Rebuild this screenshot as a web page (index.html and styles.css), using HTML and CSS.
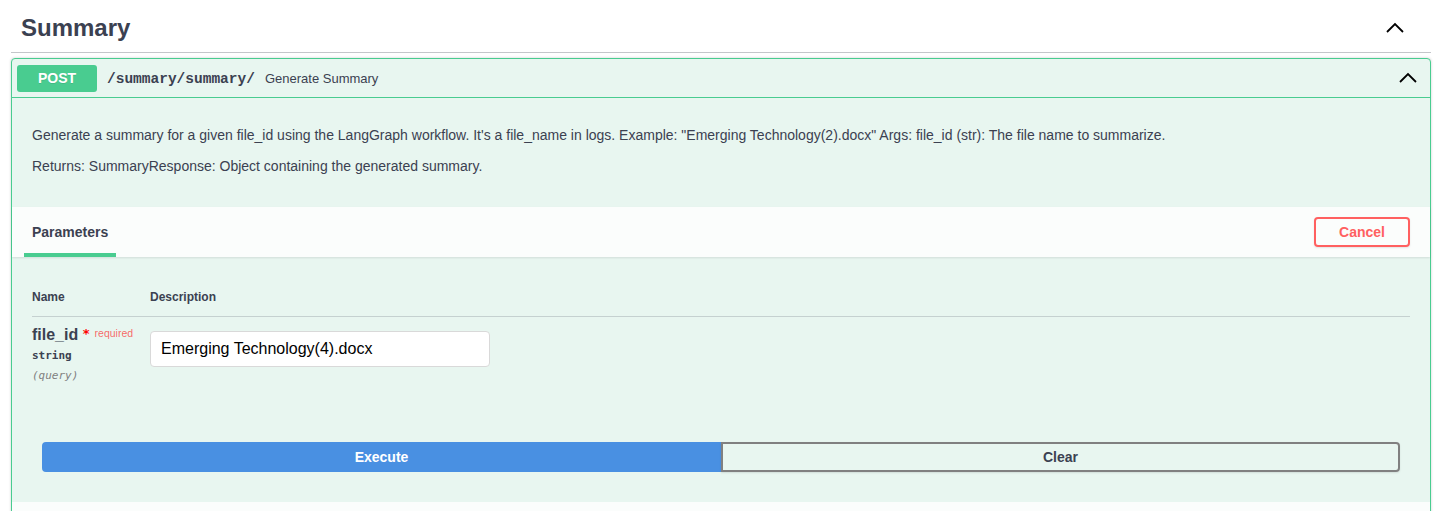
FILE: index.html
```html
<!DOCTYPE html>
<html>
<head>
<meta charset="utf-8">
<link rel="stylesheet" href="styles.css">
</head>
<body>
<div class="wrapper">
  <h3 class="tag">
    <span class="tag-name">Summary</span>
    <svg class="arrow" width="20" height="20" viewBox="0 0 20 20"><polyline points="2,14 10,6 18,14" fill="none" stroke="#000" stroke-width="1.8"/></svg>
  </h3>
  <div class="opblock">
    <div class="op-summary">
      <span class="method">POST</span>
      <span class="path">/summary/summary/</span>
      <span class="op-desc">Generate Summary</span>
      <svg class="arrow op-arrow" width="20" height="20" viewBox="0 0 20 20"><polyline points="2,14 10,6 18,14" fill="none" stroke="#000" stroke-width="1.8"/></svg>
    </div>
    <div class="op-body">
      <div class="description">
        <p>Generate a summary for a given file_id using the LangGraph workflow. It's a file_name in logs. Example: "Emerging Technology(2).docx" Args: file_id (str): The file name to summarize.</p>
        <p>Returns: SummaryResponse: Object containing the generated summary.</p>
      </div>
      <div class="section-header">
        <div class="tab">Parameters</div>
        <button class="cancel">Cancel</button>
      </div>
      <div class="params">
        <div class="params-head">
          <div class="col-name">Name</div>
          <div class="col-desc">Description</div>
        </div>
        <div class="param-row">
          <div class="col-name">
            <div class="pname">file_id<span class="star">&nbsp;*</span><span class="req">required</span></div>
            <div class="ptype">string</div>
            <div class="pin">(query)</div>
          </div>
          <div class="col-desc">
            <input class="pinput" type="text" value="Emerging Technology(4).docx">
          </div>
        </div>
      </div>
      <div class="exec-wrap">
        <button class="execute">Execute</button>
        <button class="clear">Clear</button>
      </div>
      <div class="responses"></div>
    </div>
  </div>
</div>
</body>
</html>
```

FILE: styles.css
```css
* { box-sizing: border-box; }
html, body { margin: 0; padding: 0; background: #fff; }
body { font-family: "Liberation Sans", Arial, sans-serif; color: #3b4151; }
.wrapper { padding: 0 11px 0 11px; }
.tag {
  margin: 4px 0 5px;
  padding: 10px 20px 10px 10px;
  display: flex;
  align-items: center;
  justify-content: space-between;
  border-bottom: 1px solid rgba(59,65,81,.3);
  font-size: 24px;
  font-weight: 700;
  line-height: 28px;
}
.tag .arrow { margin-right: 6px; }
.opblock {
  border: 1px solid #49cc90;
  border-radius: 4px;
  background: #e8f6f0;
  box-shadow: 0 0 3px rgba(0,0,0,.19);
}
.op-summary {
  display: flex;
  align-items: center;
  padding: 5px;
  border-bottom: 1px solid #49cc90;
  height: 39px;
}
.method {
  background: #49cc90;
  color: #fff;
  font-size: 14px;
  font-weight: 700;
  min-width: 80px;
  padding: 6px 0;
  text-align: center;
  border-radius: 3px;
  text-shadow: 0 1px 0 rgba(0,0,0,.1);
  line-height: 15px;
}
.path {
  font-family: "Liberation Mono", "DejaVu Sans Mono", monospace;
  font-weight: 700;
  font-size: 14.5px;
  padding: 0 10px;
  position: relative;
  top: 1px;
}
.op-desc { font-size: 13px; flex: 1; }
.op-arrow { margin-right: 7px; }
.description { padding: 17px 20px 30px; font-size: 14px; }
.description p { margin: 10px 0 0; line-height: 21px; }
.description p + p { margin-top: 10px; }
.section-header {
  background: rgba(255,255,255,.8);
  box-shadow: 0 1px 2px rgba(0,0,0,.1);
  min-height: 50px;
  padding: 0 20px 0 12px;
  display: flex;
  align-items: center;
  justify-content: space-between;
}
.tab {
  align-self: stretch;
  display: flex;
  align-items: center;
  padding: 0 8px;
  font-size: 14px;
  font-weight: 700;
  border-bottom: 4px solid #49cc90;
  padding-top: 4px;
}
.cancel {
  background: transparent;
  border: 2px solid #ff6060;
  color: #ff6060;
  border-radius: 4px;
  font-family: "Liberation Sans", Arial, sans-serif;
  font-weight: 700;
  font-size: 14px;
  padding: 5px 0;
  width: 96px;
  height: 30px;
  box-shadow: 0 1px 2px rgba(0,0,0,.1);
}
.params { padding: 33px 20px 0; }
.params-head {
  display: flex;
  font-size: 12px;
  font-weight: 700;
  padding-bottom: 12px;
  border-bottom: 1px solid rgba(59,65,81,.2);
}
.col-name { width: 118px; }
.col-desc { flex: 1; }
.param-row { display: flex; padding-top: 8px; }
.pname { font-size: 16px; font-weight: 700; line-height: 20px; }
.star { color: #ff0000; font-size: 13px; vertical-align: top; font-weight: 700; font-family: "DejaVu Sans", sans-serif; position: relative; top: -1px; }
.req { color: rgba(255,0,0,.6); font-size: 10.5px; vertical-align: top; font-weight: 400; margin-left: 5px; position: relative; top: -2px; }
.ptype { font-family: "DejaVu Sans Mono", monospace; font-size: 11px; font-weight: 700; padding: 4px 0 7px; }
.pin { font-family: "DejaVu Sans Mono", monospace; font-size: 11px; font-style: italic; color: #808080; }
.pinput {
  margin-top: 6px;
  width: 340px;
  height: 36px;
  border: 1px solid #d9d9d9;
  border-radius: 4px;
  padding: 8px 10px;
  font-family: "Liberation Sans", Arial, sans-serif;
  font-size: 16px;
  color: #000;
  background: #fff;
}
.exec-wrap { display: flex; padding: 60px 30px 30px; }
.execute, .clear {
  flex: 1;
  height: 30px;
  font-family: "Liberation Sans", Arial, sans-serif;
  font-size: 14px;
  font-weight: 700;
}
.execute {
  background: #4990e2;
  border: 2px solid #4990e2;
  color: #fff;
  border-radius: 4px 0 0 4px;
}
.clear {
  background: transparent;
  border: 2px solid #808080;
  color: #3b4151;
  border-radius: 0 4px 4px 0;
  box-shadow: 0 1px 2px rgba(0,0,0,.1);
}
.responses { background: rgba(255,255,255,.8); height: 20px; }
```
